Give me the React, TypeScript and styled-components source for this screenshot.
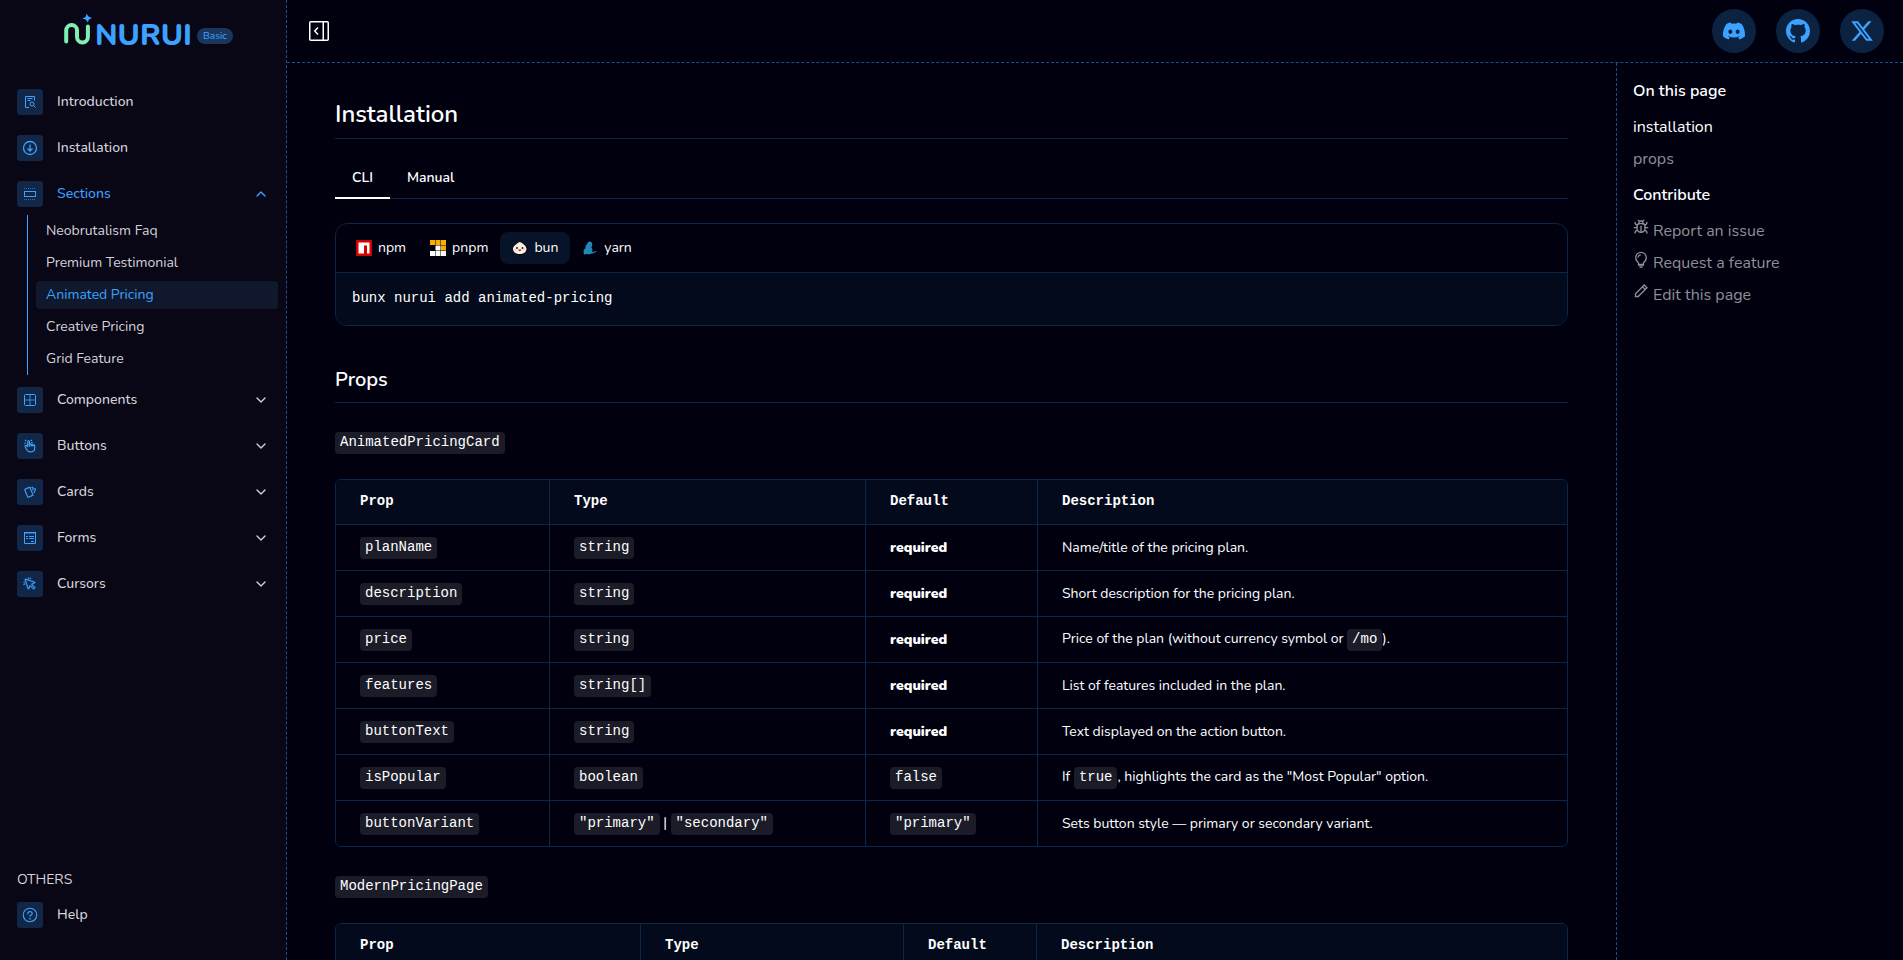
import React from "react";
import styled, { createGlobalStyle } from "styled-components";
import { BsGithub } from "react-icons/bs";
import { FaDiscord, FaXTwitter } from "react-icons/fa6";
import { PiCursorClick, PiQuestion } from "react-icons/pi";
import { TbHandClick, TbCards } from "react-icons/tb";
import { LuBug } from "react-icons/lu";
import { ChevronDown, ChevronUp } from "lucide-react";

const color = {
  page: "#00000f",
  sidebar: "#090615",
  primary: "#3ba2ff",
  dashed: "#1b4f86",
  line: "#0a2648",
  panel: "#030a1b",
  tile: "#122747",
  code: "#1b1c28",
  muted: "#8f8f96",
  navText: "#d3d3d8",
};

const mono = `"Liberation Mono", monospace`;

const GlobalStyle = createGlobalStyle`
  *, *::before, *::after { box-sizing: border-box; }
  body {
    margin: 0;
    background: ${color.page};
    color: #fff;
    font: 400 14px/20px Nunito, Lato, sans-serif;
  }
  a { color: inherit; text-decoration: none; }
  button { font: inherit; color: inherit; background: none; border: 0; padding: 0; cursor: pointer; }
  h1, h2, h3, p, ul { margin: 0; padding: 0; font-weight: inherit; }
  ul { list-style: none; }
  svg { display: block; flex: none; }
`;

const Shell = styled.div`
  display: grid;
  grid-template-columns: 287px minmax(0, 1fr);
  height: 100vh;
  overflow: hidden;
`;

const Sidebar = styled.aside`
  display: flex;
  flex-direction: column;
  background: ${color.sidebar};
  border-right: 1px dashed ${color.dashed};
  padding: 0 8px 24px 9px;
  min-height: 0;
`;

const Brand = styled.a`
  display: flex;
  justify-content: center;
  align-items: flex-start;
  gap: 4px;
  height: 81px;
  padding: 13px 0 0 10px;
`;

const Badge = styled.span`
  margin-top: 15px;
  padding: 0 6px;
  border-radius: 8px;
  background: #1a365d;
  color: ${color.primary};
  font-size: 10px;
  line-height: 16px;
`;

const NavList = styled.ul`
  display: flex;
  flex-direction: column;
  gap: 4px;
`;

const NavRow = styled.button<{ $active?: boolean }>`
  display: flex;
  align-items: center;
  gap: 14px;
  width: 100%;
  padding: 8px;
  text-align: left;
  font-weight: 500;
  color: ${(p) => (p.$active ? color.primary : color.navText)};
`;

const NavLabel = styled.span`
  flex: 1;
`;

const Chevron = styled.span`
  padding-right: 1px;
`;

const Tile = styled.span`
  display: grid;
  place-items: center;
  width: 26px;
  height: 26px;
  border-radius: 3px;
  background: ${color.tile};
  color: ${color.primary};
`;

const SubList = styled.ul`
  margin-left: 18px;
  padding: 2px 0 2px 8px;
  border-left: 1px solid ${color.primary};
  display: flex;
  flex-direction: column;
  gap: 4px;
`;

const SubLink = styled.a<{ $active?: boolean }>`
  display: block;
  padding: 4px 10px;
  border-radius: 4px;
  color: ${(p) => (p.$active ? color.primary : color.navText)};
  background: ${(p) => (p.$active ? "#0f182d" : "transparent")};
`;

const Others = styled.div`
  margin-top: auto;
`;

const OthersTitle = styled.p`
  padding: 0 8px 4px;
  color: ${color.navText};
`;

const Body = styled.div`
  display: flex;
  flex-direction: column;
  min-height: 0;
`;

const TopBar = styled.header`
  display: flex;
  align-items: center;
  justify-content: space-between;
  height: 63px;
  flex: none;
  padding: 0 19px 0 22px;
  border-bottom: 1px dashed ${color.dashed};
`;

const Socials = styled.div`
  display: flex;
  gap: 20px;
`;

const SocialLink = styled.a`
  display: grid;
  place-items: center;
  width: 44px;
  height: 44px;
  border-radius: 50%;
  background: #0b2240;
  color: ${color.primary};
`;

const Columns = styled.div`
  display: grid;
  grid-template-columns: minmax(0, 1fr) 287px;
  flex: 1;
  min-height: 0;
`;

const Content = styled.main`
  padding: 33px 48px;
  overflow-y: auto;
  scrollbar-width: none;
`;

const Title = styled.h1`
  padding-bottom: 6px;
  border-bottom: 1px solid ${color.line};
  font-size: 24px;
  line-height: 36px;
  font-weight: 600;
`;

const Subtitle = styled.h2`
  margin-top: 40px;
  padding-bottom: 8px;
  border-bottom: 1px solid ${color.line};
  font-size: 20px;
  line-height: 28px;
  font-weight: 600;
`;

const Tabs = styled.div`
  display: flex;
  margin-top: 20px;
  border-bottom: 1px solid ${color.line};
`;

const Tab = styled.button<{ $active?: boolean }>`
  height: 40px;
  padding: 0 17px;
  margin-bottom: -1px;
  font-weight: 600;
  border-bottom: 2px solid ${(p) => (p.$active ? "#fff" : "transparent")};
`;

const Command = styled.section`
  margin-top: 24px;
  border: 1px solid ${color.line};
  border-radius: 12px;
  overflow: hidden;
`;

const Managers = styled.div`
  display: flex;
  padding: 8px;
  border-bottom: 1px solid ${color.line};
`;

const Manager = styled.button<{ $active?: boolean }>`
  display: flex;
  align-items: center;
  gap: 6px;
  height: 32px;
  padding: 0 12px;
  border-radius: 8px;
  background: ${(p) => (p.$active ? "#061328" : "transparent")};
`;

const CommandLine = styled.pre`
  margin: 0;
  padding: 15px 16px 17px;
  background: ${color.panel};
  font: 400 14px/20px ${mono};
`;

const Code = styled.code`
  display: inline-block;
  padding: 2px 5px 4px;
  border-radius: 4px;
  background: ${color.code};
  font: 400 14px/16px ${mono};
`;

const ComponentName = styled.h3`
  display: flex;
  margin: 29px 0 25px;
`;

const Frame = styled.div`
  border: 1px solid ${color.line};
  border-radius: 6px;
  overflow: hidden;
`;

const Table = styled.table`
  width: 100%;
  table-layout: fixed;
  border-collapse: separate;
  border-spacing: 0;
`;

const Th = styled.th`
  height: 44px;
  padding: 0 24px 2px;
  background: ${color.panel};
  text-align: left;
  font: 700 14px/20px ${mono};
  & + & { border-left: 1px solid ${color.line}; }
`;

const Td = styled.td`
  height: 46px;
  padding: 0 24px;
  border-top: 1px solid ${color.line};
  & + & { border-left: 1px solid ${color.line}; }
`;

const Required = styled.strong`
  font-weight: 900;
`;

const Toc = styled.aside`
  padding: 16px;
  border-left: 1px dashed ${color.dashed};
  font-size: 16px;
  line-height: 24px;
`;

const TocTitle = styled.h2`
  font-size: 16px;
  font-weight: 600;
`;

const TocList = styled.ul`
  display: flex;
  flex-direction: column;
  gap: 8px;
  padding: 12px 0;
`;

const TocLink = styled.a<{ $active?: boolean }>`
  display: flex;
  gap: 4px;
  color: ${(p) => (p.$active ? "#fff" : color.muted)};
`;

const Logo = () => (
  <svg width="129" height="36" viewBox="0 0 129 36" overflow="visible" role="img" aria-label="Nurui">
    <path d="M2.200 28.500V17.500a5.400 5.400 0 0 1 10.800 0V24a5.400 5.400 0 0 0 10.900 0V13.500" fill="none" stroke="#7ff0b2" strokeWidth="4" strokeLinecap="round" />
    <path d="M22.700 0.800l1.700 2.800 3.600 1.300-3 1.500-1.300 3.200-1.700-2.800-3.500-1.300 3-1.500z" fill={color.primary} />
    <text x="31" y="32" fill={color.primary} fontFamily="Nunito, Lato, sans-serif" fontWeight="800" fontSize="30">NURUI</text>
  </svg>
);

const line = { fill: "none", stroke: "currentColor" } as const;

const IntroIcon = () => (
  <svg width="14" height="14" viewBox="0 0 14 14" {...line}>
    <path d="M6 12.500H2.500v-11h9v4M4.500 3.500h5M4.500 5.500h3" />
    <circle cx="9" cy="9" r="2" />
    <path d="M10.500 10.500l2 2" />
  </svg>
);

const InstallIcon = () => (
  <svg width="16" height="16" viewBox="0 0 16 16" {...line} strokeWidth="1.300">
    <circle cx="8" cy="8" r="6.500" />
    <path d="M8 4.500v6M5.500 8.500L8 11l2.500-2.500" />
  </svg>
);

const SectionsIcon = () => (
  <svg width="14" height="14" viewBox="0 0 14 14" {...line}>
    <rect x="1.500" y="4.500" width="11" height="5" />
    <path d="M1 1.500h12M1 12.500h12" strokeDasharray="1 1" opacity="0.600" />
  </svg>
);

const GridIcon = () => (
  <svg width="14" height="14" viewBox="0 0 14 14" {...line}>
    <rect x="1.500" y="1.500" width="11" height="11" rx="1" />
    <path d="M7 2v10M2 7h10" opacity="0.800" />
  </svg>
);

const FormIcon = () => (
  <svg width="14" height="14" viewBox="0 0 14 14" {...line}>
    <path d="M1.500 1v11.500h11V1" />
    <path d="M1 1.500h12" />
    <path d="M2.500 2.500h10" strokeDasharray="1 1" />
    <path d="M3 5.500h2M6 5.500h5M3 7.500h2M6 7.500h5M8 10.500h3" />
  </svg>
);

const BulbIcon = () => (
  <svg width="16" height="18" viewBox="0 0 16 18" {...line} strokeWidth="1.300">
    <path d="M5.500 13.500v-1.700C3.800 10.600 2.700 9 2.700 6.600a5.300 5.300 0 0 1 10.600 0c0 2.400-1.100 4-2.800 5.200v1.700z" />
    <path d="M5 6.500A3 3 0 0 1 7.800 3.800" />
    <path d="M5 14h6M6.500 16h3" strokeWidth="1.500" />
  </svg>
);

const PencilIcon = () => (
  <svg width="16" height="16" viewBox="0 0 16 16" {...line} strokeWidth="1.300">
    <path d="M2.500 13.500v-2.800L11.300 2l2.700 2.700-8.800 8.800zM9.500 3.800l2.700 2.700" />
  </svg>
);

const CollapseIcon = () => (
  <svg width="20" height="20" viewBox="0 0 20 20" fill="none" stroke="#fff" strokeWidth="1.500">
    <rect x="0.750" y="0.750" width="18.500" height="18.500" rx="1" />
    <path d="M14.250 1v18M9 6.500L5.750 10 9 13.500" />
  </svg>
);

const NpmIcon = () => (
  <svg width="16" height="16" viewBox="0 0 16 16">
    <path fill="#d40000" d="M0 0h16v16H0z" />
    <path fill="#fff" d="M2.500 2.500h11v11H11V5.500H8v8H2.500z" />
  </svg>
);

const PnpmIcon = () => (
  <svg width="16" height="16" viewBox="0 0 16 16">
    <path fill="#f9ad00" d="M0 0h5v5H0zM5.500 0h5v5h-5zM11 0h5v5h-5zM11 5.500h5v5h-5z" />
    <path fill="#fff" d="M5.500 5.500h5v5h-5zM0 11h5v5H0zM5.500 11h5v5h-5zM11 11h5v5h-5z" />
  </svg>
);

const BunIcon = () => (
  <svg width="16" height="16" viewBox="0 0 16 16">
    <ellipse cx="8.500" cy="9" rx="7" ry="6" fill="#000" />
    <path fill="#fbf0df" d="M1 9c0-3 3-4.500 5.500-6.500.8-.7 1.700-.7 2.500 0C11.500 4 14.500 6 14.500 9c0 3-3 5-6.700 5S1 12 1 9z" />
    <circle cx="5" cy="8" r="1" fill="#222" />
    <circle cx="10.500" cy="8" r="1" fill="#222" />
    <circle cx="3.500" cy="9.700" r="0.900" fill="#febbd0" />
    <circle cx="12" cy="9.700" r="0.900" fill="#febbd0" />
    <path fill="#b71422" d="M6.400 9.600h2.800c0 2-2.800 2-2.800 0z" />
  </svg>
);

const YarnIcon = () => (
  <svg width="16" height="16" viewBox="0 0 16 16">
    <path fill="#2188b6" d="M5.300 3L7.400 1.300l1.400.7 1.200.5.300 3-.9 1.900c1.200 1.500 1.300 3 .8 4.600 1.500 0 2.500-1 3.900-1.100.6.300.5.900 0 1.100-2 .5-2.700 1.600-4.900 1.800-2 .5-4 .8-5 .3-.8.500-2.600.6-2.600-.3.200-.5.300-.8.100-1.600-.5-2 .6-3.200 1.700-4C3.300 6 4.300 4.500 5.300 4z" />
  </svg>
);

const groups: { label: string; icon: React.ReactNode }[] = [
  { label: "Components", icon: <GridIcon /> },
  { label: "Buttons", icon: <TbHandClick size={14} /> },
  { label: "Cards", icon: <TbCards size={14} /> },
  { label: "Forms", icon: <FormIcon /> },
  { label: "Cursors", icon: <PiCursorClick size={14} stroke="currentColor" strokeWidth={6} /> },
];

const sections = ["Neobrutalism Faq", "Premium Testimonial", "Animated Pricing", "Creative Pricing", "Grid Feature"];

const required = <Required>required</Required>;

const cardProps: [string, React.ReactNode, React.ReactNode, React.ReactNode][] = [
  ["planName", <Code>string</Code>, required, "Name/title of the pricing plan."],
  ["description", <Code>string</Code>, required, "Short description for the pricing plan."],
  ["price", <Code>string</Code>, required, <>Price of the plan (without currency symbol or <Code>/mo</Code>).</>],
  ["features", <Code>string[]</Code>, required, "List of features included in the plan."],
  ["buttonText", <Code>string</Code>, required, "Text displayed on the action button."],
  ["isPopular", <Code>boolean</Code>, <Code>false</Code>, <>If <Code>true</Code>, highlights the card as the "Most Popular" option.</>],
  ["buttonVariant", <><Code>"primary"</Code> | <Code>"secondary"</Code></>, <Code>"primary"</Code>, "Sets button style — primary or secondary variant."],
];

const PropsTable = ({ widths, rows }: { widths: string[]; rows: typeof cardProps }) => (
  <Frame>
    <Table>
      <colgroup>
        {widths.map((w, i) => <col key={i} width={w} />)}
        <col />
      </colgroup>
      <thead>
        <tr>{["Prop", "Type", "Default", "Description"].map((h) => <Th key={h} scope="col">{h}</Th>)}</tr>
      </thead>
      <tbody>
        {rows.map(([name, type, def, text]) => (
          <tr key={name}>
            <Td><Code>{name}</Code></Td>
            <Td>{type}</Td>
            <Td>{def}</Td>
            <Td>{text}</Td>
          </tr>
        ))}
      </tbody>
    </Table>
  </Frame>
);

export default function App() {
  return (
    <>
      <GlobalStyle />
      <Shell>
        <Sidebar>
          <Brand href="#">
            <Logo />
            <Badge>Basic</Badge>
          </Brand>
          <nav>
            <NavList>
              <li><NavRow as="a" href="#"><Tile><IntroIcon /></Tile><NavLabel>Introduction</NavLabel></NavRow></li>
              <li><NavRow as="a" href="#"><Tile><InstallIcon /></Tile><NavLabel>Installation</NavLabel></NavRow></li>
              <li>
                <NavRow $active aria-expanded="true">
                  <Tile><SectionsIcon /></Tile>
                  <NavLabel>Sections</NavLabel>
                  <Chevron><ChevronUp size={16} /></Chevron>
                </NavRow>
                <SubList>
                  {sections.map((s) => (
                    <li key={s}><SubLink href="#" $active={s === "Animated Pricing"}>{s}</SubLink></li>
                  ))}
                </SubList>
              </li>
              {groups.map((g) => (
                <li key={g.label}>
                  <NavRow aria-expanded="false">
                    <Tile>{g.icon}</Tile>
                    <NavLabel>{g.label}</NavLabel>
                    <Chevron><ChevronDown size={16} /></Chevron>
                  </NavRow>
                </li>
              ))}
            </NavList>
          </nav>
          <Others>
            <OthersTitle>OTHERS</OthersTitle>
            <NavRow as="a" href="#"><Tile><PiQuestion size={18} /></Tile><NavLabel>Help</NavLabel></NavRow>
          </Others>
        </Sidebar>
        <Body>
          <TopBar>
            <button aria-label="Toggle sidebar"><CollapseIcon /></button>
            <Socials>
              <SocialLink href="#" aria-label="Discord"><FaDiscord size={24} /></SocialLink>
              <SocialLink href="#" aria-label="GitHub"><BsGithub size={24} /></SocialLink>
              <SocialLink href="#" aria-label="X"><FaXTwitter size={24} /></SocialLink>
            </Socials>
          </TopBar>
          <Columns>
            <Content>
              <Title>Installation</Title>
              <Tabs role="tablist">
                <Tab role="tab" aria-selected="true" $active>CLI</Tab>
                <Tab role="tab" aria-selected="false">Manual</Tab>
              </Tabs>
              <Command>
                <Managers>
                  <Manager><NpmIcon />npm</Manager>
                  <Manager><PnpmIcon />pnpm</Manager>
                  <Manager $active><BunIcon />bun</Manager>
                  <Manager><YarnIcon />yarn</Manager>
                </Managers>
                <CommandLine>bunx nurui add animated-pricing</CommandLine>
              </Command>
              <Subtitle>Props</Subtitle>
              <ComponentName><Code>AnimatedPricingCard</Code></ComponentName>
              <PropsTable widths={["213", "316", "172"]} rows={cardProps} />
              <ComponentName><Code>ModernPricingPage</Code></ComponentName>
              <PropsTable widths={["304", "263", "133"]} rows={[]} />
            </Content>
            <Toc>
              <TocTitle>On this page</TocTitle>
              <TocList>
                <li><TocLink href="#" $active>installation</TocLink></li>
                <li><TocLink href="#">props</TocLink></li>
              </TocList>
              <TocTitle>Contribute</TocTitle>
              <TocList>
                <li><TocLink href="#"><LuBug size={16} />Report an issue</TocLink></li>
                <li><TocLink href="#"><BulbIcon />Request a feature</TocLink></li>
                <li><TocLink href="#"><PencilIcon />Edit this page</TocLink></li>
              </TocList>
            </Toc>
          </Columns>
        </Body>
      </Shell>
    </>
  );
}
